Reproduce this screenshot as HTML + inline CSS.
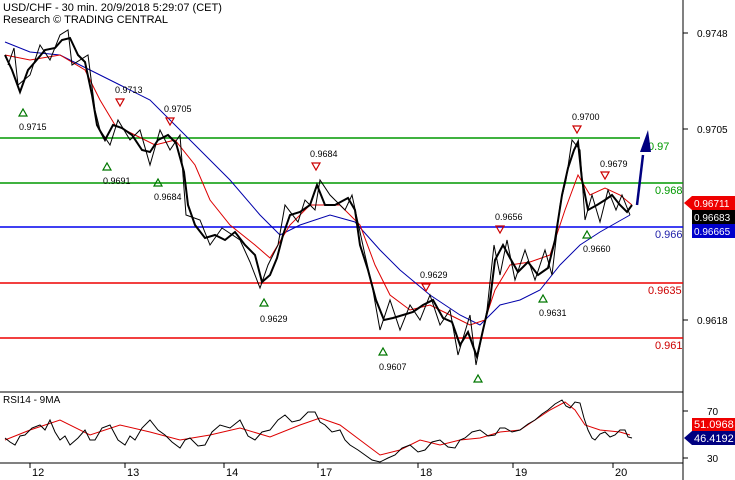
<!DOCTYPE html><html><head><style>body{margin:0;background:#fff}svg{display:block;font-family:"Liberation Sans",sans-serif}</style></head><body>
<svg width="735" height="480" viewBox="0 0 735 480">
<rect width="735" height="480" fill="#fff"/>
<line x1="683" y1="0" x2="683" y2="480" stroke="#000"/>
<line x1="0" y1="392" x2="683" y2="392" stroke="#000"/>
<line x1="0" y1="463" x2="683" y2="463" stroke="#000"/>
<g stroke-width="1.5"><line x1="0" y1="138" x2="640" y2="138" stroke="#009900"/><line x1="0" y1="183" x2="683" y2="183" stroke="#009900"/><line x1="0" y1="227" x2="683" y2="227" stroke="#0000ee"/><line x1="0" y1="283" x2="683" y2="283" stroke="#ee0000"/><line x1="0" y1="338" x2="683" y2="338" stroke="#ee0000"/></g>
<g font-size="11"><text x="648" y="150" fill="#009900">0.97</text><text x="655" y="194" fill="#009900">0.968</text><text x="655" y="238" fill="#2222aa">0.966</text><text x="648" y="294" fill="#cc0000">0.9635</text><text x="655" y="349" fill="#cc0000">0.961</text></g>
<polyline fill="none" stroke="#0000aa" points="5,42 30,52 60,55 90,70 120,85 150,100 175,125 200,150 230,180 260,215 280,235 300,225 330,215 355,222 380,250 400,270 430,295 460,315 480,325 500,305 520,300 540,290 560,265 580,245 600,232 630,215"/>
<polyline fill="none" stroke="#dd0000" points="5,55 30,60 60,55 85,70 100,100 115,125 135,135 155,145 175,140 195,165 210,200 230,225 255,245 270,258 290,225 310,205 340,205 360,225 375,265 390,295 410,310 430,305 450,315 470,325 485,320 495,290 510,265 530,262 550,255 565,210 578,175 590,195 605,188 620,195 632,205"/>
<polyline fill="none" stroke="#000" stroke-width="2" points="5,55 12,70 20,92 28,70 35,62 45,50 55,48 62,40 70,38 78,55 85,62 92,95 97,125 105,140 113,125 122,128 132,135 142,150 150,152 158,140 168,135 176,143 184,172 188,205 195,225 205,238 215,235 225,240 235,232 245,245 255,255 262,282 270,275 277,258 283,235 290,215 300,212 310,205 317,185 325,205 335,205 348,198 355,210 360,245 368,270 376,300 384,320 393,318 403,315 413,312 423,305 433,300 443,318 452,322 460,345 468,332 477,357 483,330 490,300 495,260 503,245 510,258 518,272 528,262 538,275 548,268 555,240 562,195 568,168 574,150 578,142 582,180 588,210 597,205 605,200 612,195 620,205 627,212 632,205"/>
<polyline fill="none" stroke="#000" stroke-width="1" points="8,65 14,48 18,85 30,75 40,45 50,60 60,35 68,30 72,65 88,55 95,110 100,130 110,145 118,120 130,140 140,130 150,165 160,130 170,150 180,135 186,215 200,220 210,245 222,228 240,240 250,262 260,288 268,265 278,245 285,205 298,222 305,200 315,210 320,180 330,195 345,210 352,195 365,255 372,285 380,330 390,300 400,330 410,305 420,320 430,295 440,325 450,310 458,355 470,315 476,365 487,310 494,245 500,275 507,240 515,280 525,250 535,280 545,250 552,275 560,205 566,180 572,140 580,150 585,220 592,195 600,222 608,190 616,210 622,195 630,215"/>
<polyline fill="none" stroke="#000080" stroke-width="2.5" points="637,205 643,155"/>
<polygon points="648,130 640,152 651,152" fill="#000080"/>
<g fill="none" stroke-width="1.2">
<g stroke="#cc0000"><path d="M116,99h8l-4,7z"/><path d="M166,118h8l-4,7z"/><path d="M312,163h8l-4,7z"/><path d="M422,284h8l-4,7z"/><path d="M496,226h8l-4,7z"/><path d="M573,126h8l-4,7z"/><path d="M601,172h8l-4,7z"/></g>
<g stroke="#007700"><path d="M19,116h8l-4,-7z"/><path d="M103,170h8l-4,-7z"/><path d="M154,186h8l-4,-7z"/><path d="M260,306h8l-4,-7z"/><path d="M379,355h8l-4,-7z"/><path d="M474,382h8l-4,-7z"/><path d="M539,302h8l-4,-7z"/><path d="M583,238h8l-4,-7z"/></g></g>
<g font-size="9" fill="#000"><text x="115" y="93">0.9713</text><text x="164" y="112">0.9705</text><text x="310" y="157">0.9684</text><text x="420" y="278">0.9629</text><text x="495" y="220">0.9656</text><text x="572" y="120">0.9700</text><text x="600" y="167">0.9679</text>
<text x="19" y="130">0.9715</text><text x="103" y="184">0.9691</text><text x="154" y="200">0.9684</text><text x="260" y="322">0.9629</text><text x="379" y="370">0.9607</text><text x="539" y="316">0.9631</text><text x="583" y="252">0.9660</text></g>
<text x="3" y="11" font-size="11">USD/CHF - 30 min. 20/9/2018 5:29:07 (CET)</text>
<text x="3" y="23" font-size="11">Research © TRADING CENTRAL</text>
<g font-size="10"><text x="697" y="37">0.9748</text><text x="697" y="133">0.9705</text><text x="697" y="324">0.9618</text><text x="707" y="415">70</text><text x="707" y="462">30</text></g>
<g stroke="#000"><line x1="683" y1="33" x2="688" y2="33"/><line x1="683" y1="129" x2="688" y2="129"/><line x1="683" y1="320" x2="688" y2="320"/><line x1="683" y1="411" x2="688" y2="411"/><line x1="683" y1="458" x2="688" y2="458"/></g>
<path d="M684,203l8,-7h43v14h-43z" fill="#ee0000"/><text x="694" y="207" font-size="10" fill="#fff">0.96711</text>
<rect x="692" y="210" width="43" height="14" fill="#000"/><text x="694" y="221" font-size="10" fill="#fff">0.96683</text>
<rect x="692" y="224" width="43" height="14" fill="#0000cc"/><text x="694" y="235" font-size="10" fill="#fff">0.96665</text>
<rect x="692" y="418" width="43" height="13" fill="#ee0000"/><text x="694" y="428" font-size="11" fill="#fff">51.0968</text>
<path d="M684,438l8,-7h43v14h-43z" fill="#000080"/><text x="694" y="442" font-size="11" fill="#fff">46.4192</text>
<text x="3" y="403" font-size="10">RSI14 - 9MA</text>
<polyline fill="none" stroke="#dd0000" points="5,440 30,430 60,420 90,435 120,425 150,432 180,440 210,435 240,428 270,437 300,425 320,418 340,425 360,440 380,455 400,450 420,440 440,445 460,440 480,438 500,432 520,430 535,420 550,410 565,402 575,410 585,425 600,430 620,432 630,435"/>
<polyline fill="none" stroke="#000" points="5,438 10,442 15,445 20,436 25,435 32,428 40,425 45,430 50,420 55,432 60,440 65,436 70,445 78,438 85,430 90,440 95,440 102,428 110,425 118,440 125,445 130,436 135,440 142,428 150,420 158,430 165,435 172,442 180,448 185,440 190,438 198,446 205,445 212,432 220,425 230,428 240,420 248,436 255,440 262,432 270,430 278,420 285,415 292,422 300,420 308,412 315,412 320,422 325,425 332,432 340,430 345,440 350,445 358,450 365,455 372,460 380,462 388,458 395,455 402,448 410,445 418,452 425,450 432,442 440,440 448,447 455,448 460,440 465,438 472,432 480,430 488,436 495,435 500,428 505,428 512,432 520,430 528,424 535,420 542,414 548,410 555,404 562,400 566,406 570,408 575,402 580,403 584,418 588,430 592,438 595,440 600,434 605,432 610,437 615,435 620,430 625,430 628,437 632,438"/>
<g font-size="11"><text x="32" y="476">12</text><text x="127" y="476">13</text><text x="226" y="476">14</text><text x="320" y="476">17</text><text x="420" y="476">18</text><text x="515" y="476">19</text><text x="615" y="476">20</text></g>
<g stroke="#000"><line x1="30" y1="463" x2="30" y2="468"/><line x1="125" y1="463" x2="125" y2="468"/><line x1="224" y1="463" x2="224" y2="468"/><line x1="318" y1="463" x2="318" y2="468"/><line x1="418" y1="463" x2="418" y2="468"/><line x1="513" y1="463" x2="513" y2="468"/><line x1="613" y1="463" x2="613" y2="468"/></g>
</svg></body></html>
